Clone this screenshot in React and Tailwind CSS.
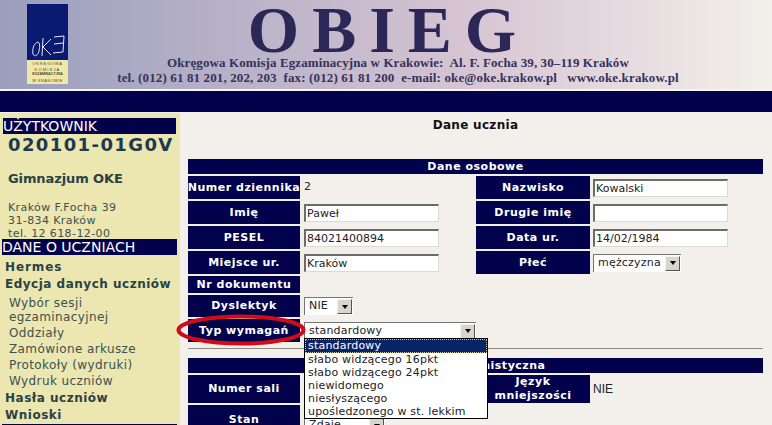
import React from 'react'

const verdana = "font-['DejaVu_Sans',sans-serif]"

function Label({ children, className = '' }) {
  return (
    <div className={`bg-[#02024c] text-white font-bold text-[11px] tracking-[0.5px] leading-[14px] flex items-center justify-center text-center whitespace-nowrap ${className}`}>
      {children}
    </div>
  )
}

function Input({ value = '' }) {
  return (
    <div className="w-[135px] h-[18px] bg-white border-t-2 border-l-2 border-t-[#6b6b6b] border-l-[#6b6b6b] border-r border-b border-r-[#dcdad4] border-b-[#dcdad4] text-[11px] leading-[15px] text-[#222] pl-[1px] overflow-hidden">
      {value}
    </div>
  )
}

function Select({ value, width }) {
  return (
    <div className={`${width} h-[18px] bg-white border-t border-l border-[#77756f] flex items-center justify-between text-[11px] text-[#222] tracking-[0.2px] pl-[4px] pr-[1px]`}>
      <span>{value}</span>
      <div className="w-[15px] h-[15px] bg-[#d8d5cc] border border-t-[#f4f3ef] border-l-[#f4f3ef] border-r-[#55534e] border-b-[#55534e] flex items-center justify-center">
        <div className="w-0 h-0 border-l-[3px] border-r-[3px] border-t-[4px] border-l-transparent border-r-transparent border-t-black" />
      </div>
    </div>
  )
}

function Row({ label, value, label2, value2, height = 'h-[23px]' }) {
  return (
    <div className={`grid grid-cols-[112px_176px_114px_173px] ${height}`}>
      <Label>{label}</Label>
      <div className="pl-[4px] flex items-center">{value}</div>
      {label2 ? <Label>{label2}</Label> : <div />}
      <div className="pl-[3px] flex items-center">{value2}</div>
    </div>
  )
}

function SectionHead({ children, className = '' }) {
  return (
    <div className={`h-[15px] bg-[#02024c] text-white font-bold text-[11px] tracking-[0.5px] leading-[15px] text-center ${className}`}>
      {children}
    </div>
  )
}

const options = ['słabo widzącego 16pkt', 'słabo widzącego 24pkt', 'niewidomego', 'niesłyszącego', 'upośledzonego w st. lekkim']

function Logo() {
  return (
    <div className="w-[41px] h-[80px] mt-[4px] flex flex-col">
      <div className="h-[56px] bg-[#0a1a73] flex items-end justify-center pb-[2px]">
        <svg width="34" height="24" viewBox="0 0 34 24" fill="none" stroke="#e8e8f0" strokeWidth="1">
          <path d="M7 8C3 9 1 15 2 20C3 23 7 22 8 17C9 12 9 9 7 8Z" />
          <path d="M12 4L11 22M20 5L12 13L20 21" />
          <path d="M23 3L33 2L32 18L22 19M23 10L32 9" />
        </svg>
      </div>
      <div className="h-[24px] bg-[#f0e8a8] text-[#4a4a30] text-[4px] leading-[5.5px] text-center font-['Liberation_Sans',sans-serif] pt-[1px] whitespace-nowrap overflow-hidden">
        <div className="tracking-[0.8px]">OKRĘGOWA</div>
        <div className="tracking-[1.2px]">KOMISJA</div>
        <div className="font-bold text-[3.5px]">EGZAMINACYJNA</div>
        <div className="tracking-[0.4px]">W KRAKOWIE</div>
      </div>
    </div>
  )
}

export default function App() {
  return (
    <div className={`w-[772px] h-[425px] overflow-hidden bg-[#f3f0eb] text-[#222] ${verdana}`}>
      {/* naglowek */}
      <div className="h-[89px] flex pl-[27px] bg-gradient-to-r from-[#9a9fbd] via-[#d6c4d2] via-60% to-[#f3f0eb] font-['Liberation_Serif',serif]">
        <Logo />
        <div className="w-[660px] flex flex-col items-center font-bold">
          <div className="text-[66px] leading-[55px] tracking-[13px] text-[#2b2858] h-[55px] pt-[2px] pr-[19px]">OBIEG</div>
          <div className="text-[13px] leading-[15px] text-[#35325c] tracking-[0.1px]">Okręgowa Komisja Egzaminacyjna w Krakowie:&nbsp; Al. F. Focha 39, 30–119 Kraków</div>
          <div className="text-[13px] leading-[15px] text-[#35325c] tracking-[0.13px] whitespace-pre">tel. (012) 61 81 201, 202, 203  fax: (012) 61 81 200  e-mail: oke@oke.krakow.pl   www.oke.krakow.pl</div>
        </div>
      </div>
      <div className="h-[2px] bg-[#f7f5f2]" />
      <div className="h-[21px] bg-[#02024c]" />

      <div className="flex">
        {/* lewa kolumna */}
        <div className="w-[180px] h-[313px] mt-[1px] bg-[#ece6b0] pt-[5px] overflow-hidden">
          <div className="ml-[3px] w-[173px] h-[16px] bg-[#02024c] text-white text-[14px] leading-[16px]">UŻYTKOWNIK</div>
          <div className="pl-[8px] text-[18px] leading-[22px] font-bold text-[#1d3a50] tracking-[1.4px] whitespace-nowrap">020101-01G0V</div>
          <div className="pl-[8px] mt-[15px] text-[13px] leading-[16px] font-bold text-[#2a4245] tracking-[-0.1px]">Gimnazjum OKE</div>
          <div className="pl-[8px] mt-[14px] text-[11px] leading-[13px] text-[#3a5252] tracking-[0.4px]">
            <div>Kraków F.Focha 39</div>
            <div>31-834 Kraków</div>
            <div>tel. 12 618-12-00</div>
          </div>
          <div className="ml-[2px] -mt-[1px] w-[175px] h-[16px] bg-[#02024c] text-white text-[14px] leading-[16px]">DANE O UCZNIACH</div>
          <div className="pl-[5px] text-[12px] leading-[17px] font-bold text-[#2a4245] tracking-[0.9px] mt-[4px]">Hermes</div>
          <div className="pl-[5px] text-[12px] leading-[17px] font-bold text-[#2a4245] tracking-[0.5px] whitespace-nowrap">Edycja danych uczniów</div>
          <div className="pl-[9px] text-[12px] text-[#3a5252] tracking-[0.4px] leading-[16px]">
            <div className="leading-[14px] mt-[3px]">Wybór sesji<br />egzaminacyjnej</div>
            <div className="mt-[1px]">Oddziały</div>
            <div>Zamówione arkusze</div>
            <div>Protokoły (wydruki)</div>
            <div>Wydruk uczniów</div>
          </div>
          <div className="pl-[5px] mt-[1px] text-[12px] leading-[17px] font-bold text-[#2a4245] tracking-[0.5px]">Hasła uczniów</div>
          <div className="pl-[5px] text-[12px] leading-[17px] font-bold text-[#2a4245] tracking-[0.5px]">Wnioski</div>
          <div className="ml-[2px] w-[175px] h-[4px] bg-[#02024c]" />
        </div>

        {/* formularz */}
        <div className="w-[575px] ml-[8px]">
          <div className="h-[47px] pt-[4px] text-center text-[12px] font-bold leading-[18px] text-[#111] tracking-[0.3px]">Dane ucznia</div>
          <SectionHead>Dane osobowe</SectionHead>
          <div className="flex flex-col gap-[2px] mt-[2px]">
            <Row label="Numer dziennika" value={<span className="text-[11px]">2</span>} label2="Nazwisko" value2={<Input value="Kowalski" />} />
            <Row label="Imię" value={<Input value="Paweł" />} label2="Drugie imię" value2={<Input />} />
            <Row label="PESEL" value={<Input value="84021400894" />} label2="Data ur." value2={<Input value="14/02/1984" />} />
            <Row label="Miejsce ur." value={<Input value="Kraków" />} label2="Płeć" value2={<Select value="mężczyzna" width="w-[88px]" />} />
            <Row label="Nr dokumentu" height="h-[17px]" />
            <Row label="Dyslektyk" value={<Select value="NIE" width="w-[49px]" />} height="h-[22px]" />
            <div className="relative">
              <Row label="Typ wymagań" value={<Select value="standardowy" width="w-[182px]" />} />
              {/* rozwinieta lista */}
              <div className="absolute left-[116px] top-[19px] w-[184px] z-20 bg-white border border-black text-[11px] leading-[13px] text-[#222] tracking-[0.2px]">
                <div className="bg-[#0a246a] text-white border border-dotted border-[#c9c9a0] pl-[2px] h-[14px] leading-[12px]">standardowy</div>
                {options.map(o => (
                  <div key={o} className="pl-[3px]">{o}</div>
                ))}
              </div>
              {/* czerwona obwodka */}
              <svg className="absolute left-[-14px] top-[-6px] z-10" width="134" height="34" viewBox="0 0 134 34" fill="none">
                <ellipse cx="67" cy="17" rx="62.5" ry="13.5" stroke="#d00c16" strokeWidth="4" />
              </svg>
            </div>
          </div>
          <div className="h-[1px] bg-[#8d8a84] mt-[6px] mb-[9px]" />
          <SectionHead className="pl-[6px]">Dane administyczna</SectionHead>
          <div className="flex flex-col gap-[3px] mt-[2px]">
            <Row label="Numer sali" label2={<span>Język<br />mniejszości</span>} value2={<span className="text-[12px] font-['Liberation_Sans',sans-serif]">NIE</span>} height="h-[27px]" />
            <Row label="Stan" value={<div className="mt-[11px]"><Select value="Zdaje" width="w-[81px]" /></div>} />
          </div>
        </div>
      </div>
    </div>
  )
}
